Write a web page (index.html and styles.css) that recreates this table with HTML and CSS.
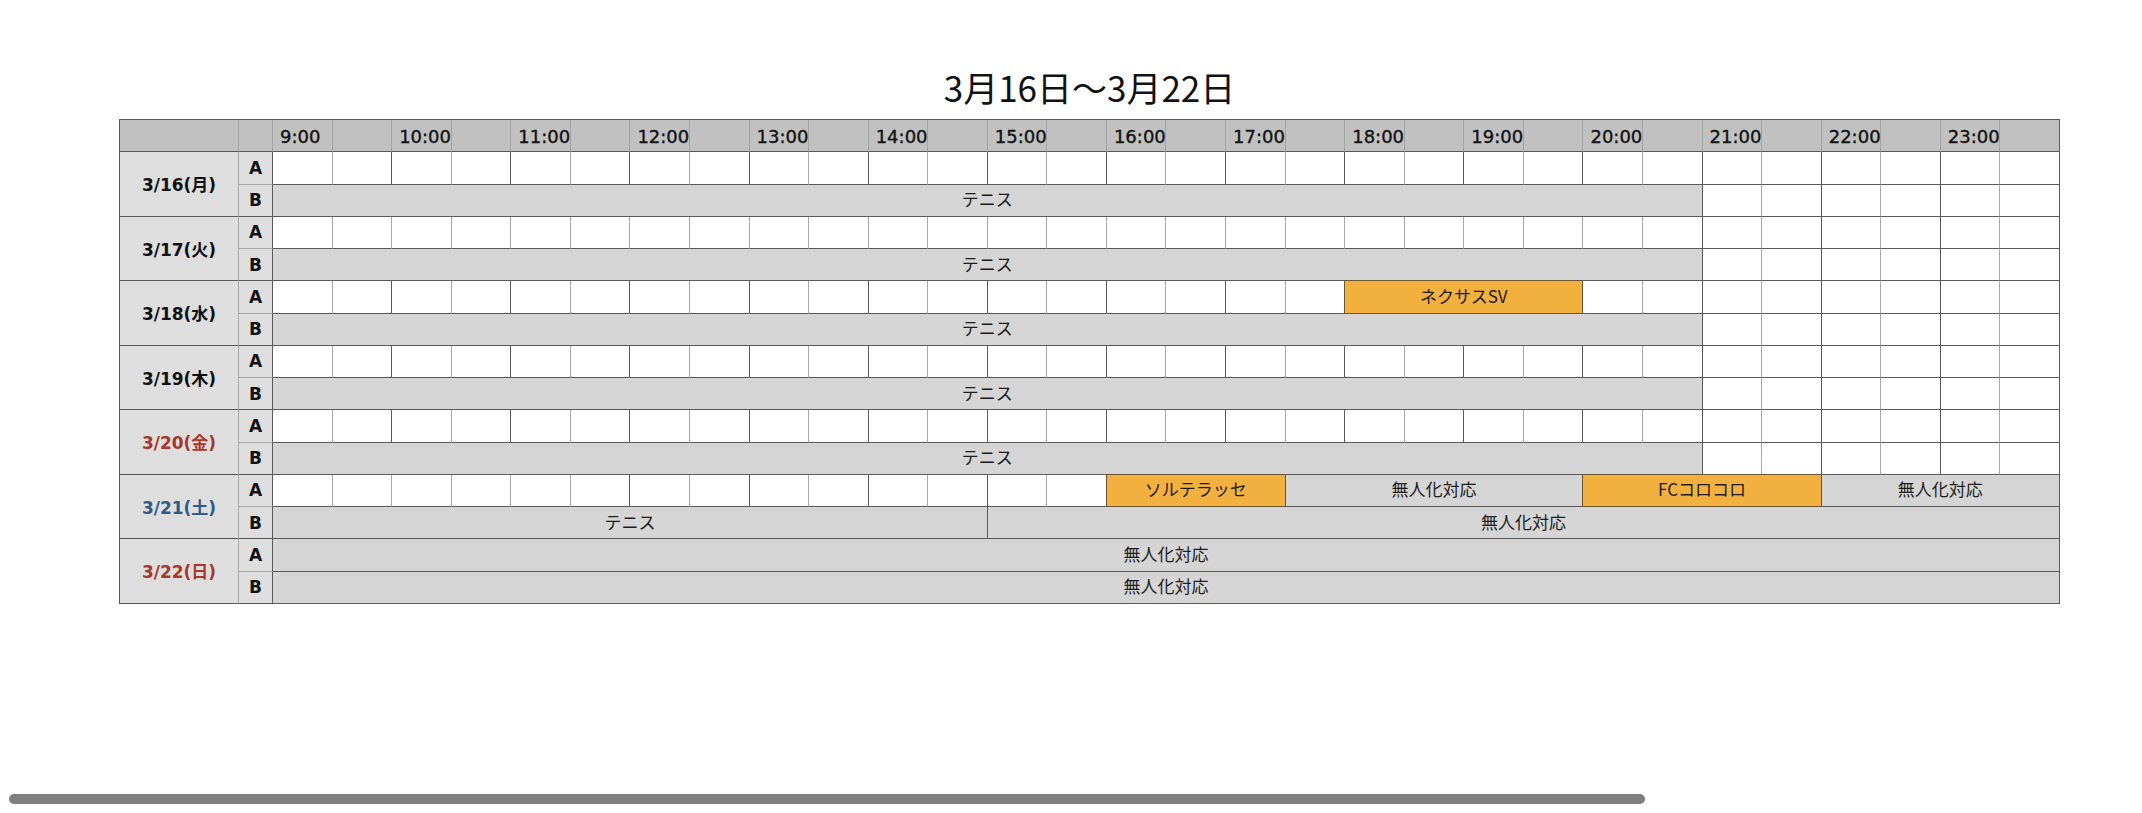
FILE: index.html
```html
<!DOCTYPE html>
<html lang="ja">
<head>
<meta charset="utf-8">
<title>3月16日～3月22日</title>
<link rel="stylesheet" href="styles.css">
</head>
<body>
<main class="page">
  <h1 class="title">3月16日～3月22日</h1>
  <div class="sched">
    <!-- header -->
    <div class="hd"></div><div class="hd"></div>
    <div class="hd t">9:00</div><div class="hd"></div>
    <div class="hd t">10:00</div><div class="hd"></div>
    <div class="hd t">11:00</div><div class="hd"></div>
    <div class="hd t">12:00</div><div class="hd"></div>
    <div class="hd t">13:00</div><div class="hd"></div>
    <div class="hd t">14:00</div><div class="hd"></div>
    <div class="hd t">15:00</div><div class="hd"></div>
    <div class="hd t">16:00</div><div class="hd"></div>
    <div class="hd t">17:00</div><div class="hd"></div>
    <div class="hd t">18:00</div><div class="hd"></div>
    <div class="hd t">19:00</div><div class="hd"></div>
    <div class="hd t">20:00</div><div class="hd"></div>
    <div class="hd t">21:00</div><div class="hd"></div>
    <div class="hd t">22:00</div><div class="hd"></div>
    <div class="hd t">23:00</div><div class="hd last"></div>

    <!-- 3/16 -->
    <div class="day">3/16(月)</div>
    <div class="ab a">A</div>
    <div class="c"></div><div class="c h"></div><div class="c"></div><div class="c h"></div><div class="c"></div><div class="c h"></div>
    <div class="c"></div><div class="c h"></div><div class="c"></div><div class="c h"></div><div class="c"></div><div class="c h"></div>
    <div class="c"></div><div class="c h"></div><div class="c"></div><div class="c h"></div><div class="c"></div><div class="c h"></div>
    <div class="c"></div><div class="c h"></div><div class="c"></div><div class="c h"></div><div class="c"></div><div class="c h"></div>
    <div class="c"></div><div class="c h"></div><div class="c"></div><div class="c h"></div><div class="c"></div><div class="c h"></div>
    <div class="ab b">B</div>
    <div class="ev s24">テニス</div>
    <div class="c"></div><div class="c h"></div><div class="c"></div><div class="c h"></div><div class="c"></div><div class="c h"></div>

    <!-- 3/17 -->
    <div class="day">3/17(火)</div>
    <div class="ab a">A</div>
    <div class="c"></div><div class="c"></div><div class="c"></div><div class="c"></div><div class="c"></div><div class="c"></div>
    <div class="c"></div><div class="c"></div><div class="c"></div><div class="c"></div><div class="c"></div><div class="c"></div>
    <div class="c"></div><div class="c"></div><div class="c"></div><div class="c"></div><div class="c"></div><div class="c"></div>
    <div class="c"></div><div class="c"></div><div class="c"></div><div class="c"></div><div class="c"></div><div class="c h"></div>
    <div class="c"></div><div class="c h"></div><div class="c"></div><div class="c h"></div><div class="c"></div><div class="c h"></div>
    <div class="ab b">B</div>
    <div class="ev s24">テニス</div>
    <div class="c"></div><div class="c h"></div><div class="c"></div><div class="c h"></div><div class="c"></div><div class="c h"></div>

    <!-- 3/18 -->
    <div class="day">3/18(水)</div>
    <div class="ab a">A</div>
    <div class="c"></div><div class="c h"></div><div class="c"></div><div class="c h"></div><div class="c"></div><div class="c h"></div>
    <div class="c"></div><div class="c h"></div><div class="c"></div><div class="c h"></div><div class="c"></div><div class="c h"></div>
    <div class="c"></div><div class="c h"></div><div class="c"></div><div class="c h"></div><div class="c"></div><div class="c h"></div>
    <div class="ev or s4">ネクサスSV</div>
    <div class="c"></div><div class="c h"></div>
    <div class="c"></div><div class="c h"></div><div class="c"></div><div class="c h"></div><div class="c"></div><div class="c h"></div>
    <div class="ab b">B</div>
    <div class="ev s24">テニス</div>
    <div class="c"></div><div class="c h"></div><div class="c"></div><div class="c h"></div><div class="c"></div><div class="c h"></div>

    <!-- 3/19 -->
    <div class="day">3/19(木)</div>
    <div class="ab a">A</div>
    <div class="c"></div><div class="c h"></div><div class="c"></div><div class="c h"></div><div class="c"></div><div class="c h"></div>
    <div class="c"></div><div class="c h"></div><div class="c"></div><div class="c h"></div><div class="c"></div><div class="c h"></div>
    <div class="c"></div><div class="c h"></div><div class="c"></div><div class="c h"></div><div class="c"></div><div class="c h"></div>
    <div class="c"></div><div class="c h"></div><div class="c"></div><div class="c h"></div><div class="c"></div><div class="c h"></div>
    <div class="c"></div><div class="c h"></div><div class="c"></div><div class="c h"></div><div class="c"></div><div class="c h"></div>
    <div class="ab b">B</div>
    <div class="ev s24">テニス</div>
    <div class="c"></div><div class="c h"></div><div class="c"></div><div class="c h"></div><div class="c"></div><div class="c h"></div>

    <!-- 3/20 -->
    <div class="day red">3/20(金)</div>
    <div class="ab a">A</div>
    <div class="c"></div><div class="c h"></div><div class="c"></div><div class="c h"></div><div class="c"></div><div class="c h"></div>
    <div class="c"></div><div class="c h"></div><div class="c"></div><div class="c h"></div><div class="c"></div><div class="c h"></div>
    <div class="c"></div><div class="c h"></div><div class="c"></div><div class="c h"></div><div class="c"></div><div class="c h"></div>
    <div class="c"></div><div class="c h"></div><div class="c"></div><div class="c h"></div><div class="c"></div><div class="c h"></div>
    <div class="c"></div><div class="c h"></div><div class="c"></div><div class="c h"></div><div class="c"></div><div class="c h"></div>
    <div class="ab b">B</div>
    <div class="ev s24">テニス</div>
    <div class="c"></div><div class="c h"></div><div class="c"></div><div class="c h"></div><div class="c"></div><div class="c h"></div>

    <!-- 3/21 -->
    <div class="day blue">3/21(土)</div>
    <div class="ab a">A</div>
    <div class="c"></div><div class="c"></div><div class="c"></div><div class="c"></div><div class="c"></div><div class="c h"></div>
    <div class="c"></div><div class="c h"></div><div class="c"></div><div class="c h"></div><div class="c"></div><div class="c h"></div>
    <div class="c"></div><div class="c h"></div>
    <div class="ev or s3">ソルテラッセ</div>
    <div class="ev s5">無人化対応</div>
    <div class="ev or s4">FCコロコロ</div>
    <div class="ev s4">無人化対応</div>
    <div class="ab b">B</div>
    <div class="ev s12">テニス</div>
    <div class="ev s18">無人化対応</div>

    <!-- 3/22 -->
    <div class="day red">3/22(日)</div>
    <div class="ab a">A</div>
    <div class="ev s30">無人化対応</div>
    <div class="ab b">B</div>
    <div class="ev s30">無人化対応</div>
  </div>
</main>
<div class="scrollbar" aria-hidden="true"></div>
</body>
</html>
```

FILE: styles.css
```css
html, body {
  margin: 0;
  padding: 0;
  background: #ffffff;
  overflow: hidden;
}

.page {
  padding: 62px 0 0 119px;
  width: 1941px;
}

.title {
  margin: 0 0 7px 0;
  text-align: center;
  font-family: "Noto Sans CJK JP", "Noto Sans", sans-serif;
  font-weight: 400;
  font-size: 35px;
  line-height: 50px;
  color: #111;
}

.sched {
  display: grid;
  grid-template-columns: 119px 34px repeat(30, 1fr);
  grid-template-rows: repeat(15, 32.25px);
  border-top: 1px solid #5a5a5a;
  border-left: 1px solid #5a5a5a;
  font-family: "DejaVu Sans", "Noto Sans CJK JP", sans-serif;
  color: #111;
}

.sched > div {
  box-sizing: border-box;
  min-width: 0;
}

.hd {
  background: #c1c1c1;
  border-right: 1px solid #a3a3a3;
  border-bottom: 1px solid #5a5a5a;
  font-size: 18px;
  display: flex;
  align-items: center;
  padding-left: 7px;
  padding-top: 1px;
  white-space: nowrap;
  overflow: visible;
}

.hd.t {
  -webkit-text-stroke: 0.35px #111;
}

.hd.last {
  border-right-color: #5a5a5a;
}

.day {
  grid-row: span 2;
  background: #dedede;
  border-right: 1px solid #a8a8a8;
  border-bottom: 1px solid #5a5a5a;
  display: flex;
  align-items: center;
  justify-content: center;
  font-size: 17px;
  font-weight: bold;
  padding-bottom: 1px;
}

.day.red {
  color: #a8372a;
}

.day.blue {
  color: #2f5a88;
}

.ab {
  background: #dedede;
  border-right: 1px solid #5a5a5a;
  display: flex;
  align-items: center;
  justify-content: center;
  font-size: 17px;
  font-weight: bold;
}

.ab.a {
  border-bottom: 1px solid #a8a8a8;
}

.ab.b {
  border-bottom: 1px solid #5a5a5a;
}

.c {
  background: #ffffff;
  border-right: 1px solid #a8a8a8;
  border-bottom: 1px solid #5a5a5a;
}

.c.h {
  border-right-color: #5a5a5a;
}

.ev {
  background: #d5d5d5;
  border-right: 1px solid #5a5a5a;
  border-bottom: 1px solid #5a5a5a;
  display: flex;
  align-items: center;
  justify-content: center;
  font-family: "Noto Sans CJK JP", "DejaVu Sans", sans-serif;
  font-size: 17px;
  color: #1c1c1c;
  white-space: nowrap;
  padding-bottom: 3px;
}

.ev.or {
  background: #f2b13f;
  border-right-color: #6b5531;
  border-bottom-color: #6b5531;
  box-shadow: -1px -1px 0 #6b5531;
}

.s3 { grid-column: span 3; }
.s4 { grid-column: span 4; }
.s5 { grid-column: span 5; }
.s12 { grid-column: span 12; }
.s18 { grid-column: span 18; }
.s24 { grid-column: span 24; }
.s30 { grid-column: span 30; }

.scrollbar {
  position: fixed;
  left: 9px;
  top: 794px;
  width: 1636px;
  height: 10px;
  border-radius: 5px;
  background: #7f7f7f;
}
```
